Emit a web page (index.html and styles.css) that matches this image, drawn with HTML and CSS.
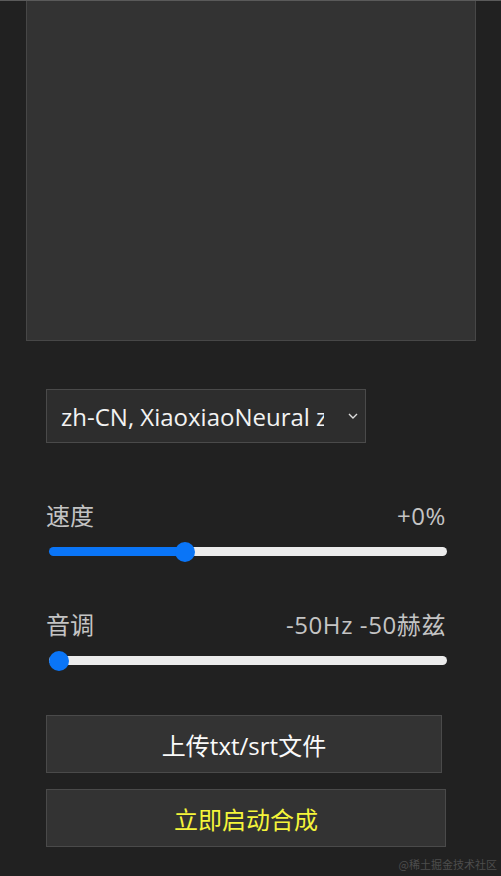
FILE: index.html
```html
<!DOCTYPE html>
<html>
<head>
    <title>TTS</title>
    <link rel="stylesheet" href="styles.css">
</head>
<body>
    <div class="page">
        <div class="preview"></div>

        <div class="controls">
            <div class="select-wrap">
                <select class="voice">
                    <option>zh-CN, XiaoxiaoNeural zh-CN 女</option>
                </select>
                <svg class="chevron" width="10" height="6" viewBox="0 0 10 6">
                    <path d="M1 1l4 4 4-4" fill="none" stroke="#ddd" stroke-width="1.4"/>
                </svg>
            </div>

            <div class="field">
                <div class="field-head">
                    <span>速度</span>
                    <span class="value">+0%</span>
                </div>
                <input type="range" class="slider" min="-100" max="200" value="0" style="--fill: 34%">
            </div>

            <div class="field">
                <div class="field-head">
                    <span>音调</span>
                    <span class="value">-50Hz -50赫兹</span>
                </div>
                <input type="range" class="slider" min="-50" max="50" value="-50" style="--fill: 0%">
            </div>

            <button class="btn upload">上传txt/srt文件</button>
            <button class="btn start">立即启动合成</button>
        </div>
    </div>
    <div class="mark">@稀土掘金技术社区</div>
</body>
</html>
```

FILE: styles.css
```css
body {
  margin: 0;
  background-color: #212121;
  font-family: "Open Sans", "Noto Sans CJK SC", sans-serif;
  color: #ccc;
  height: 876px;
  border-top: 1px solid #5a5a5a;
  box-sizing: border-box;
  position: relative;
}

.page {
  padding: 0 25px 0 26px;
}

.preview {
  height: 339px;
  background-color: #333;
  border: 1px solid #474747;
  border-top: none;
}

.controls {
  padding: 48px 30px 0 20px;
  display: flex;
  flex-direction: column;
}

.select-wrap {
  position: relative;
  width: 320px;
  height: 54px;
}

.voice {
  appearance: none;
  width: 100%;
  height: 100%;
  background-color: #2d2d2d;
  border: 1px solid #4a4a4a;
  color: #f2f2f2;
  font-family: inherit;
  font-size: 24px;
  padding: 0 41px 0 14px;
  outline: none;
}

.chevron {
  position: absolute;
  right: 8px;
  top: 24px;
}

.field {
  margin-top: 58px;
}

.field + .field {
  margin-top: 54px;
}

.field-head {
  display: flex;
  justify-content: space-between;
  font-size: 24px;
  color: #c4c4c4;
  line-height: 30px;
}

.value {
  letter-spacing: 0.6px;
}

.slider {
  appearance: none;
  -webkit-appearance: none;
  display: block;
  width: 398px;
  height: 9px;
  margin: 16px 0 0 3px;
  border-radius: 5px;
  background: linear-gradient(to right, #0a75f7 var(--fill), #ececec var(--fill));
  outline: none;
}

.slider::-webkit-slider-thumb {
  -webkit-appearance: none;
  width: 20px;
  height: 20px;
  border-radius: 50%;
  background: #0a75f7;
  border: none;
}

.btn {
  height: 58px;
  background-color: #333;
  border: 1px solid #4a4a4a;
  font-family: inherit;
  font-size: 24px;
  cursor: pointer;
}

.upload {
  margin-top: 50px;
  width: 396px;
  color: #fafafa;
}

.start {
  margin-top: 16px;
  width: 400px;
  color: #f5f53a;
}

.mark {
  position: absolute;
  right: 4px;
  bottom: 4px;
  font-size: 11px;
  color: #4d4d4d;
  font-family: "Noto Sans CJK SC", sans-serif;
}
```
